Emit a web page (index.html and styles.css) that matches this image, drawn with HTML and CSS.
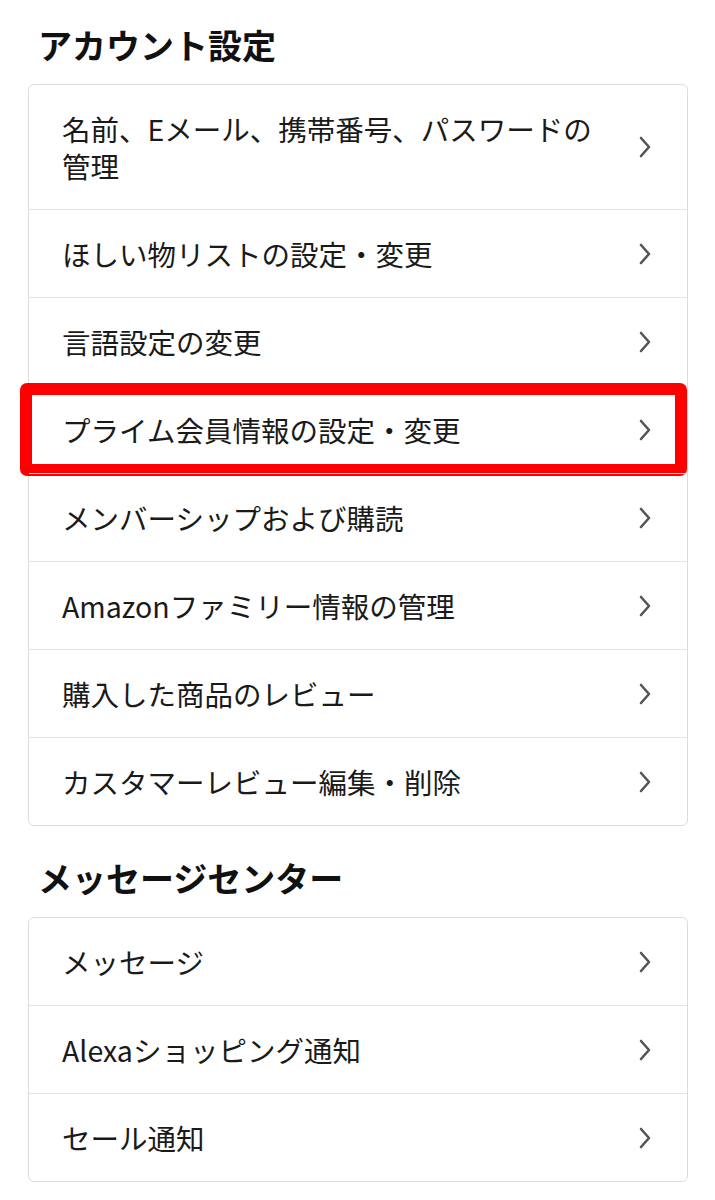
FILE: index.html
```html
<!DOCTYPE html>
<html lang="ja">
<head>
<meta charset="utf-8">
<title>アカウント設定</title>
<link rel="stylesheet" href="styles.css">
</head>
<body>
<main class="page">
  <section class="section">
    <h2 class="section-title">アカウント設定</h2>
    <ul class="card">
      <li class="row"><span class="label">名前、Eメール、携帯番号、パスワードの管理</span><svg class="chev" viewBox="0 0 14 24"><path d="M3 3 L11 12 L3 21"/></svg></li>
      <li class="row"><span class="label">ほしい物リストの設定・変更</span><svg class="chev" viewBox="0 0 14 24"><path d="M3 3 L11 12 L3 21"/></svg></li>
      <li class="row"><span class="label">言語設定の変更</span><svg class="chev" viewBox="0 0 14 24"><path d="M3 3 L11 12 L3 21"/></svg></li>
      <li class="row highlighted"><span class="label">プライム会員情報の設定・変更</span><svg class="chev" viewBox="0 0 14 24"><path d="M3 3 L11 12 L3 21"/></svg></li>
      <li class="row"><span class="label">メンバーシップおよび購読</span><svg class="chev" viewBox="0 0 14 24"><path d="M3 3 L11 12 L3 21"/></svg></li>
      <li class="row"><span class="label">Amazonファミリー情報の管理</span><svg class="chev" viewBox="0 0 14 24"><path d="M3 3 L11 12 L3 21"/></svg></li>
      <li class="row"><span class="label">購入した商品のレビュー</span><svg class="chev" viewBox="0 0 14 24"><path d="M3 3 L11 12 L3 21"/></svg></li>
      <li class="row"><span class="label">カスタマーレビュー編集・削除</span><svg class="chev" viewBox="0 0 14 24"><path d="M3 3 L11 12 L3 21"/></svg></li>
    </ul>
  </section>
  <section class="section">
    <h2 class="section-title">メッセージセンター</h2>
    <ul class="card">
      <li class="row"><span class="label">メッセージ</span><svg class="chev" viewBox="0 0 14 24"><path d="M3 3 L11 12 L3 21"/></svg></li>
      <li class="row"><span class="label">Alexaショッピング通知</span><svg class="chev" viewBox="0 0 14 24"><path d="M3 3 L11 12 L3 21"/></svg></li>
      <li class="row"><span class="label">セール通知</span><svg class="chev" viewBox="0 0 14 24"><path d="M3 3 L11 12 L3 21"/></svg></li>
    </ul>
  </section>
</main>
</body>
</html>
```
FILE: styles.css
```css
* { box-sizing: border-box; }
html, body {
  margin: 0;
  padding: 0;
  background: #fff;
}
body {
  font-family: "Noto Sans CJK JP", "Noto Sans", sans-serif;
  color: #111;
}
.page {
  padding: 23px 27px 20px 28px;
  display: flex;
  flex-direction: column;
  gap: 30px;
}
.section {
  display: flex;
  flex-direction: column;
  gap: 17px;
}
.section-title {
  margin: 0 0 0 10px;
  font-size: 34px;
  line-height: 44px;
  font-weight: 700;
  color: #111;
}
.card {
  list-style: none;
  margin: 0;
  padding: 0;
  border: 1px solid #dcdcdc;
  border-radius: 6px;
  background: #fff;
}
.row {
  position: relative;
  display: flex;
  align-items: center;
  justify-content: space-between;
  gap: 30px;
  padding: 25px 35px 25px 33px;
  border-top: 1px solid #e3e3e3;
  font-size: 28.5px;
  line-height: 37px;
  color: #1a1a1a;
}
.row:first-child {
  border-top: none;
}
.label {
  flex: 1;
}
.chev {
  width: 14px;
  height: 24px;
  flex: none;
  fill: none;
  stroke: #555;
  stroke-width: 2.6;
  stroke-linecap: round;
  stroke-linejoin: round;
}
.highlighted::after {
  content: "";
  position: absolute;
  top: -3px;
  bottom: -3px;
  left: -9px;
  right: 0;
  border: 12px solid #ff0000;
  border-radius: 7px;
  pointer-events: none;
}
```
